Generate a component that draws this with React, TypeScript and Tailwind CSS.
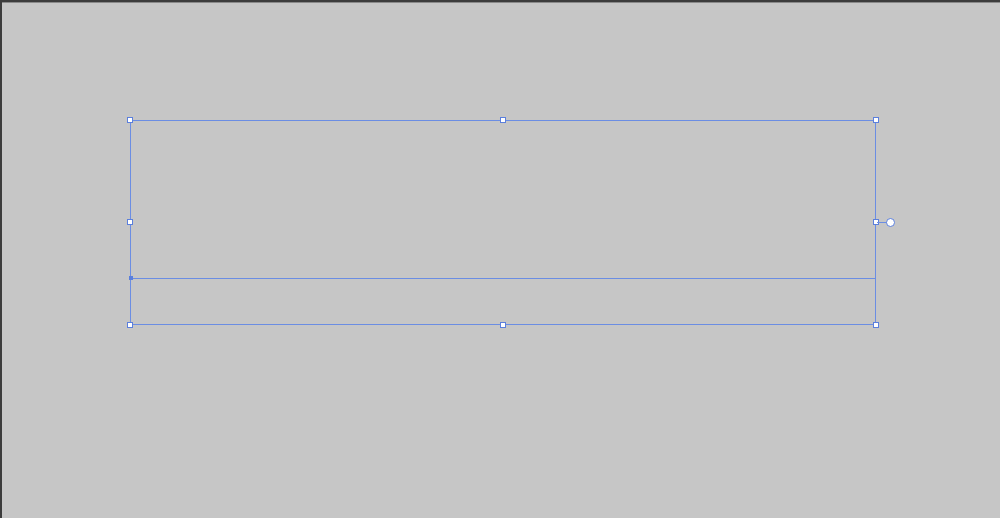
const handle = 'absolute h-[6px] w-[6px] border border-[#5b7fdc] bg-white'

export default function App() {
  return (
    <div className="relative h-[518px] w-[1000px] overflow-hidden border-l-2 border-t-2 border-[#3c3c3c] bg-[#c6c6c6]">
      <div className="h-px w-full bg-[#8a8a8a]" />
      {/* selection box on the canvas */}
      <div className="absolute left-[128px] top-[118px] h-[205px] w-[746px] border border-[#6b8de3]">
        <div className="absolute left-0 right-0 top-[157px] h-px bg-[#6b8de3]" />
        <div className="absolute left-[-2px] top-[155px] h-[4px] w-[4px] bg-[#5b7fdc]" />
        <div className={`${handle} left-[-4px] top-[-4px]`} />
        <div className={`${handle} left-[369px] top-[-4px]`} />
        <div className={`${handle} right-[-4px] top-[-4px]`} />
        <div className={`${handle} left-[-4px] top-[98px]`} />
        <div className={`${handle} right-[-4px] top-[98px]`} />
        <div className={`${handle} bottom-[-4px] left-[-4px]`} />
        <div className={`${handle} bottom-[-4px] left-[369px]`} />
        <div className={`${handle} bottom-[-4px] right-[-4px]`} />
        {/* rotate handle */}
        <div className="absolute right-[-12px] top-[101px] h-px w-[10px] bg-[#6b8de3]" />
        <div className="absolute right-[-20px] top-[97px] h-[9px] w-[9px] rounded-full border border-[#5b7fdc] bg-white" />
      </div>
    </div>
  )
}
